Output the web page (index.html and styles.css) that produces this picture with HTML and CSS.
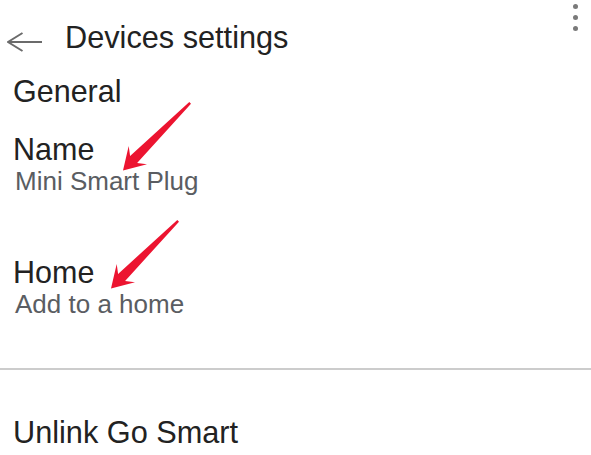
FILE: index.html
```html
<!DOCTYPE html>
<html>
<head>
<meta charset="utf-8">
<link rel="stylesheet" href="styles.css">
</head>
<body>
<div class="page">
  <header class="header">
    <svg class="back" width="36" height="20" viewBox="0 0 36 20">
      <path d="M1 10 H35 M15.5 1 L1 10 L15.5 19" fill="none" stroke="#6b6b6b" stroke-width="2"/>
    </svg>
    <h1 class="title">Devices settings</h1>
  </header>
  <div class="menu-dots"><span></span><span></span><span></span></div>

  <h2 class="section">General</h2>

  <div class="item item-name">
    <div class="item-title">Name</div>
    <div class="item-sub">Mini Smart Plug</div>
  </div>

  <div class="item item-home">
    <div class="item-title">Home</div>
    <div class="item-sub">Add to a home</div>
  </div>

  <hr class="divider">

  <div class="item-title unlink">Unlink Go Smart</div>

  <svg class="annotations" width="591" height="455" viewBox="0 0 591 455">
    <path fill="#ec1430" d="M123 170.5 L147 164.3 L137.1 162.9 L191 103.7 L189.3 102 L130.1 155.9 L128.7 146 Z"/>
    <path fill="#ec1430" transform="translate(-12 118)" d="M123 170.5 L147 164.3 L137.1 162.9 L191 103.7 L189.3 102 L130.1 155.9 L128.7 146 Z"/>
  </svg>
</div>
</body>
</html>
```

FILE: styles.css
```css
html, body {
  margin: 0;
  padding: 0;
  background: #ffffff;
}

.page {
  position: relative;
  width: 591px;
  height: 455px;
  overflow: hidden;
  font-family: "Liberation Sans", Arial, sans-serif;
  color: #222222;
  padding-left: 13px;
  box-sizing: border-box;
}

.header {
  display: flex;
  align-items: flex-start;
  padding-top: 18px;
  height: 40px;
  margin-left: -6px;
}

.back {
  margin-top: 14px;
  margin-right: 22px;
  flex: none;
}

.title {
  margin: 0;
  font-size: 30.7px;
  font-weight: normal;
  line-height: 40px;
}

.menu-dots {
  position: absolute;
  top: 4px;
  right: 13px;
  display: flex;
  flex-direction: column;
  gap: 6px;
}

.menu-dots span {
  display: block;
  width: 5px;
  height: 5px;
  border-radius: 50%;
  background: #7a7a7a;
}

.section {
  margin: 15px 0 0 0;
  font-size: 30.5px;
  font-weight: normal;
  line-height: 36px;
}

.item-name {
  margin-top: 21.6px;
}

.item-home {
  margin-top: 58.4px;
}

.item-title {
  font-size: 30.5px;
  line-height: 36px;
  color: #222222;
}

.item-sub {
  font-size: 26px;
  line-height: 30px;
  margin-top: -1px;
  margin-left: 2px;
  color: #5a5d62;
}

.divider {
  border: none;
  height: 2px;
  background: #cccccc;
  margin: 49px 0 0 -13px;
}

.unlink {
  margin-top: 44.7px;
  font-size: 30.7px;
}

.annotations {
  position: absolute;
  top: 0;
  left: 0;
  pointer-events: none;
}
```
